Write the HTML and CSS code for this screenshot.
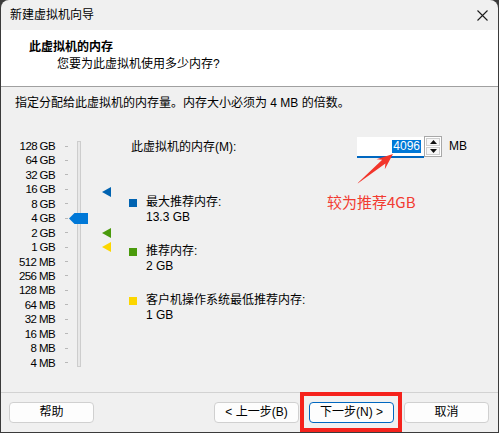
FILE: index.html
```html
<!DOCTYPE html>
<html lang="zh-CN">
<head>
<meta charset="utf-8">
<title>新建虚拟机向导</title>
<link rel="stylesheet" href="styles.css">
</head>
<body>
<div class="window">
  <div class="titlebar">
    <span class="title">新建虚拟机向导</span>
    <svg class="close" width="11" height="11" viewBox="0 0 11 11"><path d="M0.5 0.5L10.5 10.5M10.5 0.5L0.5 10.5" stroke="#1c1c1c" stroke-width="1.1" fill="none"/></svg>
  </div>
  <div class="header">
    <div class="h-title">此虚拟机的内存</div>
    <div class="h-sub">您要为此虚拟机使用多少内存?</div>
  </div>
  <div class="content">
    <p class="desc">指定分配给此虚拟机的内存量。内存大小必须为 4 MB 的倍数。</p>
    <div class="main">
      <div class="slider">
        <div class="scale">
          <div class="row"><span class="lbl">128 GB</span><span class="tick"></span></div>
          <div class="row"><span class="lbl">64 GB</span><span class="tick"></span></div>
          <div class="row"><span class="lbl">32 GB</span><span class="tick"></span></div>
          <div class="row"><span class="lbl">16 GB</span><span class="tick"></span></div>
          <div class="row"><span class="lbl">8 GB</span><span class="tick"></span></div>
          <div class="row"><span class="lbl">4 GB</span><span class="tick"></span></div>
          <div class="row"><span class="lbl">2 GB</span><span class="tick"></span></div>
          <div class="row"><span class="lbl">1 GB</span><span class="tick"></span></div>
          <div class="row"><span class="lbl">512 MB</span><span class="tick"></span></div>
          <div class="row"><span class="lbl">256 MB</span><span class="tick"></span></div>
          <div class="row"><span class="lbl">128 MB</span><span class="tick"></span></div>
          <div class="row"><span class="lbl">64 MB</span><span class="tick"></span></div>
          <div class="row"><span class="lbl">32 MB</span><span class="tick"></span></div>
          <div class="row"><span class="lbl">16 MB</span><span class="tick"></span></div>
          <div class="row"><span class="lbl">8 MB</span><span class="tick"></span></div>
          <div class="row"><span class="lbl">4 MB</span><span class="tick"></span></div>
        </div>
        <div class="track-wrap">
          <div class="track"></div>
          <svg class="thumb" width="19" height="11" viewBox="0 0 19 11"><polygon points="0,5.5 5.5,0 19,0 19,11 5.5,11" fill="#0078d7"/></svg>
          <svg class="mk mk-max" width="9" height="10" viewBox="0 0 9 10"><polygon points="0,5 9,0 9,10" fill="#0063b1"/></svg>
          <svg class="mk mk-rec" width="9" height="10" viewBox="0 0 9 10"><polygon points="0,5 9,0 9,10" fill="#4a9a0c"/></svg>
          <svg class="mk mk-min" width="9" height="10" viewBox="0 0 9 10"><polygon points="0,5 9,0 9,10" fill="#fcd600"/></svg>
        </div>
      </div>
      <div class="panel">
        <div class="mem-row">
          <span class="mem-label">此虚拟机的内存(M):</span>
          <div class="input"><span class="sel">4096</span></div>
          <div class="spin">
            <span class="sb"><svg width="7" height="4" viewBox="0 0 7 4"><polygon points="0,4 3.5,0 7,4" fill="#111"/></svg></span>
            <span class="sb"><svg width="7" height="4" viewBox="0 0 7 4"><polygon points="0,0 7,0 3.5,4" fill="#111"/></svg></span>
          </div>
          <span class="unit">MB</span>
        </div>
        <div class="legend">
          <div class="item"><span class="sq sq-blue"></span><span>最大推荐内存:</span><span></span><span>13.3 GB</span></div>
          <div class="item"><span class="sq sq-green"></span><span>推荐内存:</span><span></span><span>2 GB</span></div>
          <div class="item"><span class="sq sq-yellow"></span><span>客户机操作系统最低推荐内存:</span><span></span><span>1 GB</span></div>
        </div>
        <div class="note">较为推荐4GB</div>
        <svg class="arrow" width="42" height="36" viewBox="0 0 42 36"><polygon points="2.7,33.4 30.4,13.6 29.8,19.2 38,4 21.5,9.2 27.2,9.7 3.3,32.6" fill="#f2352b"/></svg>
      </div>
    </div>
  </div>
  <div class="footer">
    <button class="btn">帮助</button>
    <div class="spacer"></div>
    <button class="btn">&lt; 上一步(B)</button>
    <button class="btn btn-next">下一步(N) &gt;</button>
    <button class="btn">取消</button>
  </div>
</div>
</body>
</html>
```
FILE: styles.css
```css
* { box-sizing: border-box; }

html, body {
  margin: 0;
  padding: 0;
}

body {
  width: 499px;
  height: 433px;
  overflow: hidden;
  background: #3b3b3b;
  font-family: "Liberation Sans", "Noto Sans CJK SC", sans-serif;
  font-size: 12px;
  color: #000;
}

.window {
  margin-left: 1px;
  width: 497px;
  height: 432px;
  background: #f0f0f0;
  border-radius: 8px 8px 0 0;
  display: flex;
  flex-direction: column;
  position: relative;
}

.titlebar {
  height: 30px;
  flex: none;
  display: flex;
  align-items: center;
  justify-content: space-between;
  padding: 0 10px 0 9px;
  line-height: 17px;
}

.close { display: block; }

.header {
  height: 57px;
  flex: none;
  background: #fff;
  border-bottom: 1px solid #a0a0a0;
  padding: 9px 0 0 28px;
}

.h-title {
  font-weight: bold;
  line-height: 17px;
}

.h-sub {
  line-height: 17px;
  padding-left: 28px;
}

.content {
  flex: 1;
  padding-top: 8px;
}

.desc {
  margin: 0;
  padding-left: 14px;
  line-height: 17px;
}

.main {
  display: flex;
  align-items: flex-start;
  margin-top: 24px;
}

.slider {
  display: flex;
  margin-top: 2.8px;
}

.scale {
  display: flex;
  flex-direction: column;
}

.row {
  display: flex;
  align-items: center;
  height: 14.44px;
}

.lbl {
  width: 54px;
  text-align: right;
  font-size: 11.5px;
  letter-spacing: -0.6px;
  line-height: 14px;
  white-space: nowrap;
}

.tick {
  width: 3px;
  height: 1px;
  background: #b8b8b8;
  margin-left: 10px;
}

.track-wrap {
  position: relative;
  width: 60px;
  height: 231px;
  margin-left: 1px;
}

.track {
  margin: 2.2px 0 0 8px;
  width: 4px;
  height: 226px;
  background: #e8e8e8;
  border: 1px solid #cdcdcd;
}

.thumb {
  position: absolute;
  left: 0;
  top: 74.2px;
}

.mk {
  position: absolute;
  left: 33px;
}

.mk-max { top: 47.9px; }
.mk-rec { top: 89.2px; }
.mk-min { top: 102.9px; }

.panel {
  position: relative;
  flex: 1;
}

.mem-row {
  display: flex;
  align-items: flex-start;
  height: 21px;
}

.mem-label {
  width: 228px;
  padding-left: 2px;
  line-height: 21px;
  margin-top: 1px;
  white-space: nowrap;
}

.input {
  width: 67px;
  height: 21px;
  margin-top: 1px;
  background: #fff;
  border-bottom: 2px solid #0067c0;
  display: flex;
  align-items: center;
  justify-content: flex-end;
  padding-right: 3px;
}

.sel {
  background: #0078d7;
  color: #fff;
  line-height: 13px;
  padding: 0 1px;
}

.spin {
  width: 18px;
  height: 21px;
  border: 1px solid #a8a8a8;
  background: #fff;
  display: flex;
  flex-direction: column;
  padding: 1px;
  gap: 1px;
}

.sb {
  flex: 1;
  border: 1px solid #cfcfcf;
  background: #f7f7f7;
  display: flex;
  align-items: center;
  justify-content: center;
}

.sb svg { display: block; }

.unit {
  margin-left: 7px;
  line-height: 21px;
}

.legend {
  margin-top: 38px;
  display: flex;
  flex-direction: column;
  gap: 19px;
}

.item {
  display: grid;
  grid-template-columns: 8px auto;
  column-gap: 9px;
  justify-content: start;
  line-height: 15px;
}

.sq {
  width: 8px;
  height: 8px;
  align-self: center;
}

.sq-blue { background: #0063b1; }
.sq-green { background: #4a9a0c; }
.sq-yellow { background: #fcd600; }

.note {
  position: absolute;
  left: 198px;
  top: 56px;
  font-family: "Noto Sans CJK SC", sans-serif;
  font-size: 15px;
  line-height: 20px;
  color: #f23b31;
  white-space: nowrap;
}

.arrow {
  position: absolute;
  left: 226px;
  top: 14px;
}

.footer {
  height: 40px;
  flex: none;
  border-top: 1px solid #d2d2d2;
  display: flex;
  align-items: flex-start;
  gap: 10px;
  padding: 9px 9px 9px 8px;
}

.spacer { flex: 1; }

.btn {
  width: 85px;
  height: 21px;
  padding: 0;
  font-family: "Liberation Sans", "Noto Sans CJK SC", sans-serif;
  font-size: 12px;
  line-height: 19px;
  color: #000;
  background: #fdfdfd;
  border: 1px solid #d0d0d0;
  border-radius: 4px;
  white-space: nowrap;
}

.btn-next {
  position: relative;
  border-color: #0067c0;
}

.btn-next::after {
  content: "";
  position: absolute;
  left: -10px;
  right: -9px;
  top: -11px;
  bottom: -10px;
  border: 4px solid #f5221c;
}
```
